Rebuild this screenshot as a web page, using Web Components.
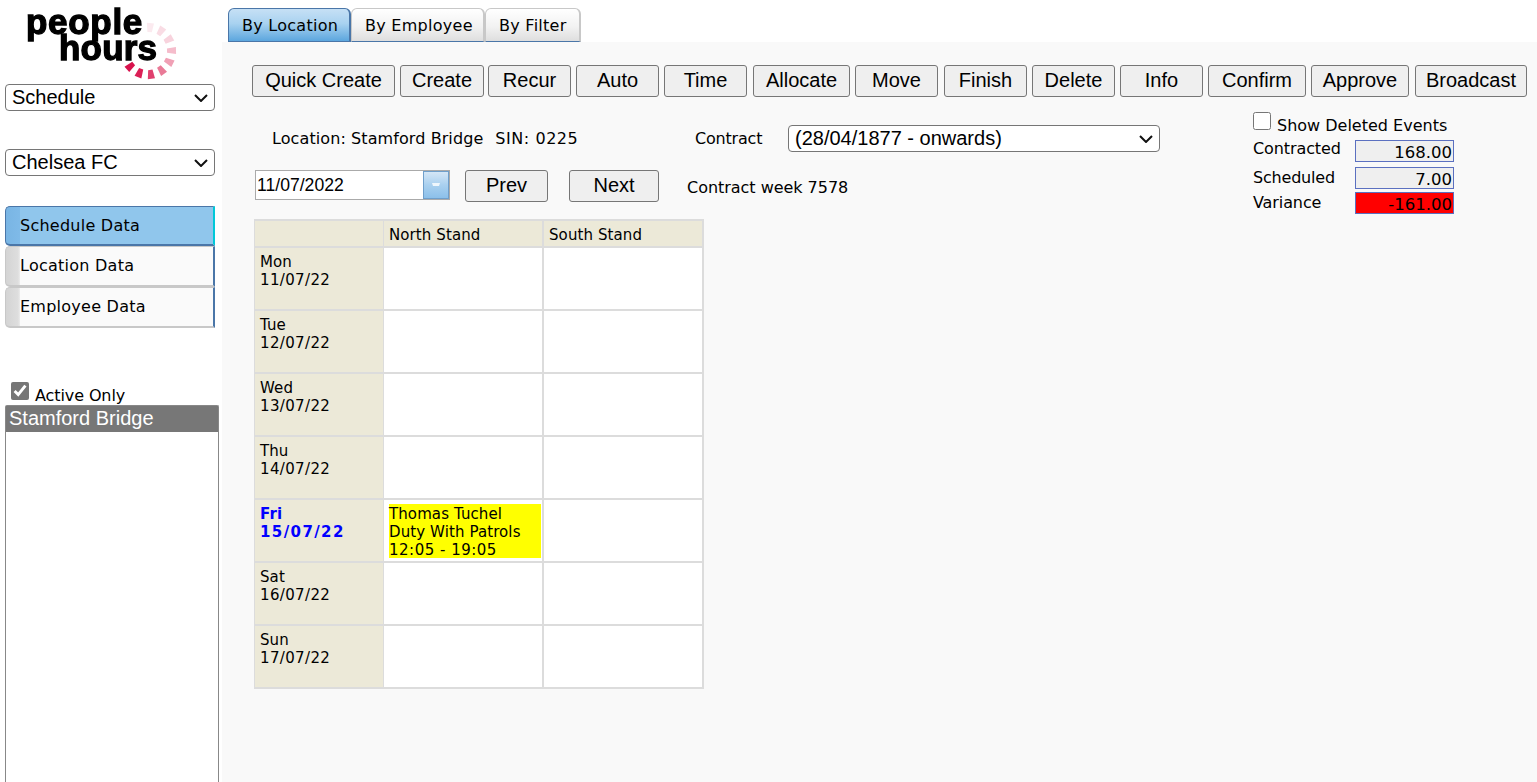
<!DOCTYPE html>
<html>
<head>
<meta charset="utf-8">
<title>People Hours</title>
<style>
  html, body { margin: 0; height: 100%; overflow: hidden; background: #fff; }
  body { font-family: "DejaVu Sans", Verdana, sans-serif; font-size: 15px; color: #000; }
</style>
</head>
<body>
<ph-app></ph-app>
<script>
(function initPeopleHours() {
  const SANS = '"Liberation Sans", Arial, sans-serif';
  const VERDANA = '"DejaVu Sans", Verdana, sans-serif';

  class PhLogo extends HTMLElement {
    constructor() {
      super();
      this.attachShadow({ mode: "open" });
      const colors = ["#fbeaef", "#f9dce4", "#f8d3dd", "#f5bccb", "#f0a0b5", "#e97a97", "#e0406e", "#db1f56", "#d8134d"];
      const rays = colors.map((c, i) => `<path d="M-2.2 -19 L2.2 -19 L3.6 -28 L-3.6 -28 Z" transform="rotate(${5 + i * 28})" fill="${c}"/>`);
      this.shadowRoot.innerHTML = `<style>
        :host { display: block; position: relative; box-sizing: border-box; width: 180px; height: 84px; padding-top: 9px; }
        .word {
          display: block;
          font-family: ${SANS};
          font-weight: 700;
          font-size: 35px;
          line-height: 26px;
          height: 26px;
          color: #000;
          -webkit-text-stroke: 1.3px #000;
          filter: blur(0.4px);
          white-space: nowrap;
        }
        .people { margin-left: 26px; letter-spacing: 0.7px; }
        .hours { margin-left: 59px; letter-spacing: 0.2px; }
        svg { position: absolute; left: 118px; top: 21px; }
      </style>
      <span class="word people">people</span>
      <span class="word hours">hours</span>
      <svg width="60" height="60" viewBox="-30 -30 60 60">${rays.join("")}</svg>`;
    }
  }

  class PhSelect extends HTMLElement {
    constructor() {
      super();
      this.attachShadow({ mode: "open" });
      const value = this.getAttribute("value") || "";
      this.shadowRoot.innerHTML = `<style>
        :host { display: block; position: relative; }
        select {
          display: block;
          box-sizing: border-box;
          width: 100%;
          height: 100%;
          margin: 0;
          padding: 0 0 1px 6px;
          appearance: none;
          font-family: ${SANS};
          font-size: 20px;
          color: #000;
          background: #fff;
          border: 1px solid #767676;
          border-radius: 4px;
        }
        svg { position: absolute; right: 7px; top: 10px; pointer-events: none; }
      </style>
      <select><option>${value}</option></select>
      <svg width="14" height="8" viewBox="0 0 14 8"><path d="M1 1 L7 7 L13 1" fill="none" stroke="#111" stroke-width="2"/></svg>`;
    }
  }

  class PhNavItem extends HTMLElement {
    constructor() {
      super();
      this.attachShadow({ mode: "open" });
      this.shadowRoot.innerHTML = `<style>
        :host { display: block; }
        .item {
          box-sizing: border-box;
          height: 100%;
          display: flex;
          align-items: center;
          padding: 0 0 1px 14px;
          background: linear-gradient(to right, #d4d4d4 0, #dedede 12px, #ececec 14px, #fafafa 14px);
          border: 1px solid #c8c8c8;
          border-bottom-width: 2px;
          border-right: 2px solid #4a76a8;
          border-radius: 5px 0 0 5px;
          font-family: ${VERDANA};
          font-size: 16px;
          letter-spacing: 0.25px;
          color: #000;
        }
        :host([active]) .item {
          background: linear-gradient(to right, #79b5e4 0, #7fbae8 14px, #90c6ec 14px);
          border-color: #4a76a8;
          border-right-color: #00c8d8;
        }
      </style>
      <div class="item"><slot></slot></div>`;
    }
  }

  class PhSidebar extends HTMLElement {
    constructor() {
      super();
      this.attachShadow({ mode: "open" });
      this.shadowRoot.innerHTML = `<style>
        :host {
          display: flex;
          flex-direction: column;
          box-sizing: border-box;
          width: 222px;
          flex: none;
          height: 782px;
          background: #fff;
          overflow: hidden;
        }
        ph-logo { flex: none; }
        .body { flex: 1; display: flex; flex-direction: column; padding-left: 5px; min-height: 0; }
        ph-select { width: 210px; height: 27px; flex: none; }
        .second { margin-top: 38px; }
        nav { display: flex; flex-direction: column; width: 210px; margin-top: 30px; }
        nav ph-nav-item { height: 41px; }
        nav ph-nav-item:first-child { height: 40px; }
        .active-only {
          display: flex;
          align-items: flex-start;
          margin: 54px 0 0 6px;
          height: 23px;
          font-family: ${VERDANA};
          font-size: 16px;
          letter-spacing: -0.1px;
        }
        .active-only input { width: 18px; height: 18px; margin: 0 6px 0 0; accent-color: #767676; flex: none; }
        .active-only span { margin-top: 4px; }
        .list {
          flex: 1;
          width: 214px;
          box-sizing: border-box;
          border: 1px solid #888;
          border-bottom: 0;
          border-radius: 2px 2px 0 0;
          font-family: ${SANS};
          font-size: 20px;
        }
        .option { height: 26px; line-height: 25px; padding-left: 3px; background: #777; color: #fff; }
      </style>
      <ph-logo></ph-logo>
      <div class="body">
        <ph-select value="Schedule"></ph-select>
        <ph-select class="second" value="Chelsea FC"></ph-select>
        <nav>
          <ph-nav-item active>Schedule Data</ph-nav-item>
          <ph-nav-item>Location Data</ph-nav-item>
          <ph-nav-item>Employee Data</ph-nav-item>
        </nav>
        <label class="active-only"><input type="checkbox" checked><span>Active Only</span></label>
        <div class="list"><div class="option">Stamford Bridge</div></div>
      </div>`;
    }
  }

  class PhTabs extends HTMLElement {
    constructor() {
      super();
      this.attachShadow({ mode: "open" });
      const tabs = [["By Location", 123], ["By Employee", 134], ["By Filter", 96]];
      this.shadowRoot.innerHTML = `<style>
        :host { display: flex; height: 42px; box-sizing: border-box; padding: 8px 0 0 6px; background: #fff; }
        .tab {
          box-sizing: border-box;
          height: 34px;
          padding: 1px 0 0 13px;
          display: flex;
          align-items: center;
          font-family: ${VERDANA};
          font-size: 16px;
          letter-spacing: 0.27px;
          background: linear-gradient(to bottom, #fff 0, #f2f2f2 55%, #dedede 100%);
          border: 2px solid #c8c8c8;
          border-width: 1px 2px 1px 1px;
          border-bottom: 1px solid #4a76a8;
          border-radius: 6px 6px 0 0;
        }
        .tab.on {
          background: linear-gradient(to bottom, #c6e0f5 0, #a9d2f0 45%, #5ca6de 100%);
          border-color: #4a76a8;
        }
      </style>
      ${tabs.map(([t, w], i) => `<div class="tab${i === 0 ? " on" : ""}" style="width:${w}px">${t}</div>`).join("")}`;
    }
  }

  class PhButton extends HTMLElement {
    constructor() {
      super();
      this.attachShadow({ mode: "open" });
      this.shadowRoot.innerHTML = `<style>
        :host { display: block; }
        button {
          display: block;
          box-sizing: border-box;
          width: 100%;
          height: 100%;
          padding: 0 0 2px;
          font-family: ${SANS};
          font-size: 20px;
          color: #000;
          background: #efefef;
          border: 1px solid #767676;
          border-radius: 3px;
        }
      </style>
      <button><slot></slot></button>`;
    }
  }

  class PhToolbar extends HTMLElement {
    constructor() {
      super();
      this.attachShadow({ mode: "open" });
      // label, width, gap before
      const items = [
        ["Quick Create", 143, 0], ["Create", 84, 5], ["Recur", 83, 4], ["Auto", 83, 5], ["Time", 83, 5], ["Allocate", 97, 6],
        ["Move", 83, 5], ["Finish", 83, 6], ["Delete", 83, 5], ["Info", 83, 5], ["Confirm", 98, 5], ["Approve", 98, 5], ["Broadcast", 112, 6]
      ];
      this.shadowRoot.innerHTML = `<style>
        :host { display: flex; height: 32px; }
        ph-button { height: 32px; flex: none; }
      </style>
      ${items.map(([t, w, g]) => `<ph-button style="width:${w}px;margin-left:${g}px">${t}</ph-button>`).join("")}`;
    }
  }

  class PhDatePicker extends HTMLElement {
    constructor() {
      super();
      this.attachShadow({ mode: "open" });
      this.shadowRoot.innerHTML = `<style>
        :host {
          display: flex;
          box-sizing: border-box;
          width: 195px;
          height: 30px;
          border: 1px solid #aaa;
          background: #fff;
        }
        .value { flex: 1; font-family: ${SANS}; font-size: 17.6px; line-height: 28px; padding-left: 1px; }
        .arrow {
          width: 26px;
          box-sizing: border-box;
          border: 1px solid #6f9fcb;
          background: linear-gradient(to bottom, #d4e6f6 0, #a9d0ef 50%, #8cc0ea 100%);
          display: flex;
          align-items: center;
          justify-content: center;
        }
      </style>
      <div class="value">11/07/2022</div>
      <div class="arrow"><svg width="8" height="4" viewBox="0 0 8 4"><path d="M0 0H8L7 3H1Z" fill="#eef6fc"/></svg></div>`;
    }
  }

  class PhInfo extends HTMLElement {
    constructor() {
      super();
      this.attachShadow({ mode: "open" });
      this.shadowRoot.innerHTML = `<style>
        :host { display: block; flex: none; width: 1001px; height: 105px; font-family: ${VERDANA}; font-size: 16px; }
        .row1 { display: flex; align-items: center; height: 27px; margin-top: 28px; padding-left: 20px; }
        .loc { width: 423px; white-space: pre; display: flex; }
        .loc span { letter-spacing: 0.09px; }
        .loc .sin { margin-left: 12px; letter-spacing: 0.55px; }
        .contract { width: 93px; letter-spacing: -0.2px; }
        .row1 ph-select { width: 372px; height: 27px; }
        .row2 { display: flex; align-items: flex-start; height: 32px; margin-top: 18px; padding-left: 3px; }
        ph-button { height: 32px; }
        .prev { width: 83px; margin-left: 15px; }
        .next { width: 90px; margin-left: 21px; }
        .week { margin: 8px 0 0 28px; letter-spacing: -0.03px; }
      </style>
      <div class="row1">
        <div class="loc"><span>Location: Stamford Bridge</span><span class="sin">SIN: 0225</span></div>
        <span class="contract">Contract</span>
        <ph-select value="(28/04/1877 - onwards)"></ph-select>
      </div>
      <div class="row2">
        <ph-date-picker></ph-date-picker>
        <ph-button class="prev">Prev</ph-button>
        <ph-button class="next">Next</ph-button>
        <span class="week">Contract week 7578</span>
      </div>`;
    }
  }

  class PhTotals extends HTMLElement {
    constructor() {
      super();
      this.attachShadow({ mode: "open" });
      const row = (label, val, cls, h, off, ls) => `<div class="row" style="height:${h}px"><span class="label" style="margin-top:${off}px;letter-spacing:${ls}px">${label}</span><span class="val ${cls}">${val}</span></div>`;
      this.shadowRoot.innerHTML = `<style>
        :host { display: block; flex: none; width: 230px; font-family: ${VERDANA}; font-size: 16px; }
        .show { display: flex; align-items: flex-start; height: 28px; margin-top: 15px; }
        .show input { width: 18px; height: 18px; margin: 0 6px 0 0; flex: none; }
        .show span { margin-top: 4px; }
        .row { display: flex; align-items: flex-start; }
        .label { width: 102px; flex: none; }
        .val {
          box-sizing: border-box;
          width: 99px;
          height: 22px;
          border: 1px solid #5b70c0;
          background: #efefef;
          text-align: right;
          line-height: 21px;
          padding: 1px 1px 0 0;
          font-size: 16.5px;
        }
        .val.bad { background: #f00; }
      </style>
      <label class="show"><input type="checkbox"><span>Show Deleted Events</span></label>
      ${row("Contracted", "168.00", "", 27, -1, -0.1)}
      ${row("Scheduled", "7.00", "", 25, 1, -0.2)}
      ${row("Variance", "-161.00", "bad", 22, 1, -0.1)}`;
    }
  }

  class PhSchedule extends HTMLElement {
    constructor() {
      super();
      this.attachShadow({ mode: "open" });
      const days = [["Mon", "11/07/22"], ["Tue", "12/07/22"], ["Wed", "13/07/22"], ["Thu", "14/07/22"], ["Fri", "15/07/22"], ["Sat", "16/07/22"], ["Sun", "17/07/22"]];
      const rows = days.map(([d, date]) => {
        const today = d === "Fri";
        const shift = today ? `<div class="shift">Thomas Tuchel<br>Duty With Patrols<br><span class="time">12:05 - 19:05</span></div>` : "";
        return `<div class="day${today ? " today" : ""}"><span class="name">${d}</span><br>${date}</div><div class="cell c2">${shift}</div><div class="cell c3"></div>`;
      }).join("");
      this.shadowRoot.innerHTML = `<style>
        :host {
          display: grid;
          grid-template-columns: 128px 159px 160px;
          grid-template-rows: 25px repeat(7, 61px);
          row-gap: 2px;
          width: 450px;
          box-sizing: border-box;
          padding: 2px 2px 2px 1px;
          background: #dcdcdc;
          font-family: ${VERDANA};
          font-size: 15px;
          letter-spacing: 0.1px;
          line-height: 18px;
        }
        .head { background: #ece9d8; padding: 5px 0 0 5px; box-sizing: border-box; }
        .day { background: #ece9d8; padding: 5px 0 0 5px; letter-spacing: 0.35px; }
        .name { letter-spacing: 0.1px; }
        .today { color: #00f; font-weight: 700; letter-spacing: 1.4px; }
        .today .name { letter-spacing: 0.2px; }
        .cell { background: #fff; padding: 4px 1px 0 5px; box-sizing: border-box; }
        .c2 { border-left: 1px solid #dcdcdc; }
        .c3 { border-left: 2px solid #dcdcdc; }
        .shift { background: #ff0; height: 54px; box-sizing: border-box; padding-top: 1px; white-space: nowrap; }
        .time { letter-spacing: 0.5px; }
      </style>
      <div class="head"></div><div class="head c2">North Stand</div><div class="head c3">South Stand</div>
      ${rows}`;
    }
  }

  class PhApp extends HTMLElement {
    constructor() {
      super();
      this.attachShadow({ mode: "open" });
      this.shadowRoot.innerHTML = `<style>
        :host { display: flex; width: 1537px; height: 782px; overflow: hidden; }
        .right { flex: 1; display: flex; flex-direction: column; min-width: 0; }
        main { flex: 1; background: #f9f9f9; padding: 23px 0 0 30px; }
        .mid { display: flex; height: 122px; }
        ph-schedule { margin-left: 2px; }
      </style>
      <ph-sidebar></ph-sidebar>
      <div class="right">
        <ph-tabs></ph-tabs>
        <main>
          <ph-toolbar></ph-toolbar>
          <div class="mid"><ph-info></ph-info><ph-totals></ph-totals></div>
          <ph-schedule></ph-schedule>
        </main>
      </div>`;
    }
  }

  customElements.define("ph-logo", PhLogo);
  customElements.define("ph-select", PhSelect);
  customElements.define("ph-nav-item", PhNavItem);
  customElements.define("ph-sidebar", PhSidebar);
  customElements.define("ph-tabs", PhTabs);
  customElements.define("ph-button", PhButton);
  customElements.define("ph-toolbar", PhToolbar);
  customElements.define("ph-date-picker", PhDatePicker);
  customElements.define("ph-info", PhInfo);
  customElements.define("ph-totals", PhTotals);
  customElements.define("ph-schedule", PhSchedule);
  customElements.define("ph-app", PhApp);
})();
</script>
</body>
</html>
